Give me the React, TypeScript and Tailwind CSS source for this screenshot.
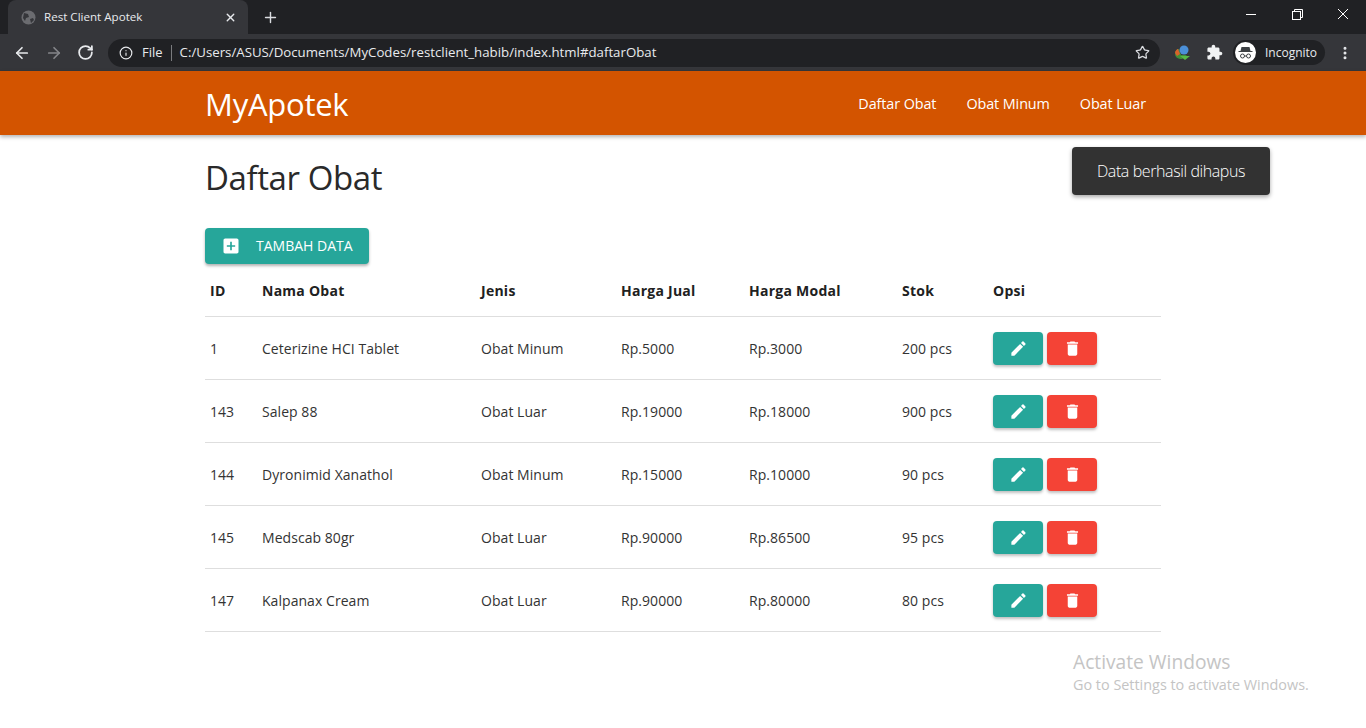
import { Plus, X, ArrowLeft, ArrowRight, RotateCw, Info, Star, EllipsisVertical } from 'lucide-react';

const rows = [
  ['1', 'Ceterizine HCI Tablet', 'Obat Minum', 'Rp.5000', 'Rp.3000', '200 pcs'],
  ['143', 'Salep 88', 'Obat Luar', 'Rp.19000', 'Rp.18000', '900 pcs'],
  ['144', 'Dyronimid Xanathol', 'Obat Minum', 'Rp.15000', 'Rp.10000', '90 pcs'],
  ['145', 'Medscab 80gr', 'Obat Luar', 'Rp.90000', 'Rp.86500', '95 pcs'],
  ['147', 'Kalpanax Cream', 'Obat Luar', 'Rp.90000', 'Rp.80000', '80 pcs'],
];

const heads = ['ID', 'Nama Obat', 'Jenis', 'Harga Jual', 'Harga Modal', 'Stok', 'Opsi'];
const widths = ['w-[52px]', 'w-[219px]', 'w-[140px]', 'w-[128px]', 'w-[153px]', 'w-[91px]', 'w-[173px]'];

const EditIcon = () => (
  <svg width="19" height="19" viewBox="0 0 24 24" fill="white">
    <path d="M3 17.25V21h3.75L17.81 9.94l-3.75-3.75L3 17.25zM20.71 7.04a1 1 0 000-1.41l-2.34-2.34a1 1 0 00-1.41 0l-1.83 1.83 3.75 3.75 1.83-1.83z" />
  </svg>
);

const TrashIcon = () => (
  <svg width="19" height="19" viewBox="0 0 24 24" fill="white">
    <path d="M6 19c0 1.1.9 2 2 2h8c1.1 0 2-.9 2-2V7H6v12zM19 4h-3.5l-1-1h-5l-1 1H5v2h14V4z" />
  </svg>
);

const AddBoxIcon = () => (
  <svg width="20" height="20" viewBox="0 0 24 24" fill="white">
    <path d="M19 3H5c-1.11 0-2 .9-2 2v14c0 1.1.89 2 2 2h14c1.1 0 2-.9 2-2V5c0-1.1-.9-2-2-2zm-2 10h-4v4h-2v-4H7v-2h4V7h2v4h4v2z" />
  </svg>
);

const ExtensionIcon = () => (
  <svg width="17" height="17" viewBox="0 0 24 24" fill="#f1f3f4">
    <path d="M20.5 11H19V7c0-1.1-.9-2-2-2h-4V3.5C13 2.12 11.88 1 10.5 1S8 2.12 8 3.5V5H4c-1.1 0-1.99.9-1.99 2v3.8H3.5c1.49 0 2.7 1.21 2.7 2.7s-1.21 2.7-2.7 2.7H2V20c0 1.1.9 2 2 2h3.8v-1.5c0-1.49 1.21-2.7 2.7-2.7 1.49 0 2.7 1.21 2.7 2.7V22H17c1.1 0 2-.9 2-2v-4h1.5c1.38 0 2.5-1.12 2.5-2.5S21.88 11 20.5 11z" />
  </svg>
);

const Browser = () => (
  <div className="h-[71px] bg-[#202124] shrink-0">
    <div className="h-[34px] flex items-end">
      <div className="ml-2 w-[240px] h-[34px] mt-0 bg-[#35363a] rounded-t-lg flex items-center pl-[13px] pr-[11px]">
        <svg width="15" height="15" viewBox="0 0 15 15">
          <circle cx="7.5" cy="7.5" r="7" fill="#6b6c70" />
          <path d="M3 3l4 1 1 3-3 1-1 3-2-3zM9 9l3-1 1 2-3 3z" fill="#35363a" />
        </svg>
        <span className="ml-[8px] text-[11.6px] text-[#e8eaed] flex-1">Rest Client Apotek</span>
        <X size={13} color="#e8eaed" strokeWidth={2.5} />
      </div>
      <div className="w-[44px] h-[34px] flex items-center justify-center">
        <Plus size={17} color="#dadce0" strokeWidth={2} />
      </div>
      <div className="flex-1" />
      <div className="h-[34px] flex items-start pt-[9px] text-white">
        <div className="w-[46px] flex justify-center">
          <svg width="10" height="10" viewBox="0 0 10 10" stroke="currentColor">
            <path d="M0 5.5h10" />
          </svg>
        </div>
        <div className="w-[46px] flex justify-center">
          <svg width="11" height="11" viewBox="0 0 11 11" fill="none" stroke="currentColor">
            <rect x="0.5" y="2.5" width="8" height="8" />
            <path d="M2.5 2.5v-2h8v8h-2" />
          </svg>
        </div>
        <div className="w-[46px] flex justify-center">
          <svg width="10" height="10" viewBox="0 0 10 10" stroke="currentColor">
            <path d="M0 0l10 10M10 0L0 10" />
          </svg>
        </div>
      </div>
    </div>
    <div className="h-[37px] bg-[#35363a] flex items-center">
      <div className="w-[108px] flex items-center pl-[13px] gap-[14px] shrink-0">
        <ArrowLeft size={18} color="#e8eaed" strokeWidth={2.25} />
        <ArrowRight size={18} color="#85868a" strokeWidth={2.25} />
        <RotateCw size={17} color="#e8eaed" strokeWidth={2.5} />
      </div>
      <div className="w-[1052px] h-[28px] rounded-full bg-[#202124] flex items-center pl-[11px] pr-[10px] text-[13px] text-[#e8eaed]">
        <Info size={14} strokeWidth={2} />
        <span className="ml-[9px]">File</span>
        <span className="w-px h-[16px] bg-[#7a7b7e] mx-[8px]" />
        <span className="flex-1 text-[13.25px]">C:/Users/ASUS/Documents/MyCodes/restclient_habib/index.html#daftarObat</span>
        <Star size={15} color="#dadce0" strokeWidth={2} />
      </div>
      <div className="w-[34px] ml-[5px] flex justify-center">
        <svg width="17" height="15" viewBox="0 0 17 15">
          <path d="M1 9c0-3 2-5 4-5l2 6 6 0-5 4C4 14 1 12 1 9z" fill="#3f8f38" />
          <path d="M1 8c0-2 2-4 3-4l2 5-3 2z" fill="#d9622b" />
          <circle cx="10" cy="5" r="4.5" fill="#4b90d9" />
          <path d="M6 11h10l-5 4z" fill="#58b947" />
        </svg>
      </div>
      <div className="ml-[7px]">
        <ExtensionIcon />
      </div>
      <div className="ml-[10px] w-[92px] h-[25px] rounded-full bg-[#202124] flex items-center pl-[2px]">
        <div className="w-[21px] h-[21px] rounded-full bg-white flex items-center justify-center">
          <svg width="15" height="13" viewBox="0 0 15 13">
            <path d="M3.5 1h8l1 4h2v1H.5V5h2z" fill="#3c4043" />
            <circle cx="4.5" cy="10" r="2" fill="none" stroke="#3c4043" />
            <circle cx="10.5" cy="10" r="2" fill="none" stroke="#3c4043" />
            <path d="M6.5 10h2" stroke="#3c4043" />
          </svg>
        </div>
        <span className="ml-[9px] text-xs text-[#e8eaed]">Incognito</span>
      </div>
      <div className="ml-[8px] w-[24px] flex justify-center">
        <EllipsisVertical size={16} color="#e8eaed" strokeWidth={2.5} />
      </div>
    </div>
  </div>
);

export default function App() {
  return (
    <div className="h-[728px] w-[1366px] overflow-hidden relative flex flex-col bg-white text-[#212121] font-['Open_Sans','Noto_Sans',sans-serif]">
      <Browser />
      <nav className="h-16 shrink-0 bg-[#d35400] shadow-[0_2px_4px_rgba(0,0,0,0.3)] text-white flex items-center px-[205px] z-10">
        <a className="text-[31px] flex-1 tracking-[-0.25px] pt-[2px]">MyApotek</a>
        <ul className="flex text-[14.4px] tracking-[-0.1px] pt-[1px]">
          <li className="px-[15px]">Daftar Obat</li>
          <li className="px-[15px]">Obat Minum</li>
          <li className="px-[15px]">Obat Luar</li>
        </ul>
      </nav>
      <main className="w-[956px] ml-[205px]">
        <h1 className="text-[33px] leading-[46px] mt-5 tracking-[-0.4px] text-[#2a2a2a]">Daftar Obat</h1>
        <button className="mt-[27px] w-[164px] h-9 rounded-sm bg-[#26a69a] text-white text-sm flex items-center pl-4 shadow-[0_2px_3px_rgba(0,0,0,0.3)]">
          <span className="mr-[15px]">
            <AddBoxIcon />
          </span>
          TAMBAH DATA
        </button>
        <table className="w-full table-fixed border-collapse text-sm">
          <thead>
            <tr className="h-[52px] border-b border-[#dedede]">
              {heads.map((h, i) => (
                <th key={h} className={`${widths[i]} pl-[5px] text-left font-bold pt-[2px] tracking-[0.25px]`}>
                  {h}
                </th>
              ))}
            </tr>
          </thead>
          <tbody>
            {rows.map((r) => (
              <tr key={r[0]} className="h-[63px] border-b border-[#dedede]">
                {r.map((c, i) => (
                  <td key={i} className="pl-[5px] pt-[2px] text-[#333333] tracking-[0.05px]">
                    {c}
                  </td>
                ))}
                <td className="pl-[5px] pt-[2px]">
                  <div className="flex gap-1">
                    <button className="w-[50px] h-[33px] rounded-sm bg-[#26a69a] flex items-center justify-center shadow-[0_2px_3px_rgba(0,0,0,0.25)]">
                      <EditIcon />
                    </button>
                    <button className="w-[50px] h-[33px] rounded-sm bg-[#f44336] flex items-center justify-center shadow-[0_2px_3px_rgba(0,0,0,0.25)]">
                      <TrashIcon />
                    </button>
                  </div>
                </td>
              </tr>
            ))}
          </tbody>
        </table>
      </main>
      <div className="absolute left-[1072px] top-[147px] w-[198px] h-12 rounded-sm bg-[#323232] text-white text-base font-light tracking-[-0.4px] flex items-center justify-center shadow-[0_2px_4px_rgba(0,0,0,0.35)]">
        Data berhasil dihapus
      </div>
      <div className="absolute left-[1073px] top-[650px] text-[#c4c4c4]">
        <div className="text-[19.2px] leading-6">Activate Windows</div>
        <div className="text-[14.4px] leading-5 mt-[1px]">Go to Settings to activate Windows.</div>
      </div>
    </div>
  );
}
